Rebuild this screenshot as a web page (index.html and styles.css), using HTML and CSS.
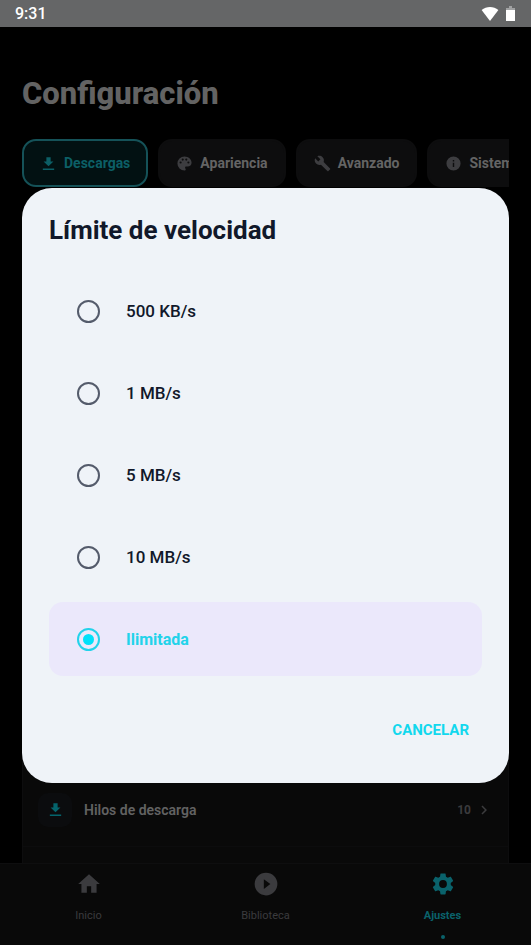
FILE: index.html
```html
<!DOCTYPE html>
<html lang="es">
<head>
<meta charset="utf-8">
<meta name="viewport" content="width=device-width, initial-scale=1">
<title>Configuración</title>
<link rel="stylesheet" href="styles.css">
</head>
<body>
<svg class="sprite" aria-hidden="true">
  <symbol id="download" viewBox="0 0 24 24"><path d="M19 9h-4V3H9v6H5l7 7 7-7zM4 19v2h16v-2H4z"/></symbol>
</svg>
<div class="app">
  <header class="status">
    <span>9:31</span>
    <span class="status-icons">
      <svg width="18" height="16" viewBox="0 0 18 16"><path d="M9 15 .6 4C3 2 6 1 9 1s6 1 8.400 3L9 15z" fill="#fff"/></svg>
      <svg width="9" height="16" viewBox="0 0 9 16"><path d="M3 0h3v2h3v4H0V2h3z" fill="#a0a1a2"/><path d="M0 4h9v11H0z" fill="#fff"/></svg>
    </span>
  </header>
  <main class="page">
    <h1>Configuración</h1>
    <nav class="tabs" aria-label="Secciones">
      <button class="tab tab-active"><svg class="icon-tab"><use href="#download"/></svg>Descargas</button>
      <button class="tab"><svg class="icon-tab" viewBox="0 0 24 24"><path d="M12 2a10 10 0 0 0 0 20c.9 0 1.700-.7 1.700-1.700 0-.4-.2-.8-.5-1.100-.2-.3-.4-.7-.4-1.100 0-.9.7-1.700 1.700-1.700h2c3 0 5.500-2.500 5.500-5.500C22 6 17.500 2 12 2zm-5.500 10a1.500 1.500 0 1 1 0-3 1.500 1.500 0 0 1 0 3zm3-4a1.500 1.500 0 1 1 0-3 1.500 1.500 0 0 1 0 3zm5 0a1.500 1.500 0 1 1 0-3 1.500 1.500 0 0 1 0 3zm3 4a1.500 1.500 0 1 1 0-3 1.500 1.500 0 0 1 0 3z"/></svg>Apariencia</button>
      <button class="tab"><svg class="icon-tab" viewBox="0 0 24 24"><path d="m22.700 19-9.100-9.100c.9-2.300.4-5-1.500-6.900-2-2-5-2.400-7.400-1.300L9 6 6 9 1.600 4.700C.4 7.100.9 10.100 2.900 12.100c1.900 1.900 4.600 2.400 6.900 1.500l9.100 9.100c.4.4 1 .4 1.400 0l2.300-2.300c.5-.4.5-1.100.1-1.400z"/></svg>Avanzado</button>
      <button class="tab"><svg class="icon-tab" viewBox="0 0 24 24"><path d="M12 2a10 10 0 1 0 0 20 10 10 0 0 0 0-20zm1 15h-2v-6h2v6zm0-8h-2V7h2v2z"/></svg>Sistema</button>
    </nav>
    <section class="settings">
      <button class="setting">
        <span class="setting-icon"><svg width="17" height="17"><use href="#download"/></svg></span>
        <span class="setting-name">Hilos de descarga</span>
        <span class="setting-value">10</span>
        <svg width="18" height="18" viewBox="0 0 24 24"><path d="M10 6 8.600 7.400l4.600 4.600-4.600 4.600L10 18l6-6z"/></svg>
      </button>
    </section>
  </main>
  <nav class="bottom" aria-label="Principal">
    <a class="dest" href="#inicio"><svg width="26" height="26" viewBox="0 0 24 24"><path d="M10 20v-6h4v6h5v-8h3L12 3 2 12h3v8z"/></svg>Inicio</a>
    <a class="dest" href="#biblioteca"><svg width="26" height="26" viewBox="0 0 24 24"><path d="M12 1.500a10.500 10.500 0 1 0 0 21 10.500 10.500 0 0 0 0-21zm-2 15v-9l6 4.500-6 4.500z"/></svg>Biblioteca</a>
    <a class="dest dest-active" href="#ajustes"><svg width="26" height="26" viewBox="0 0 24 24"><path d="M19.140 12.940c.040-.3.060-.610.060-.940 0-.320-.020-.640-.070-.940l2.030-1.580c.180-.140.230-.410.120-.610l-1.920-3.320c-.120-.220-.370-.290-.590-.220l-2.390.960c-.5-.380-1.030-.7-1.620-.940l-.360-2.540c-.040-.240-.240-.410-.480-.410h-3.840c-.240 0-.430.170-.470.410l-.360 2.540c-.590.240-1.130.570-1.620.940l-2.390-.960c-.220-.080-.470 0-.590.220L2.740 8.870c-.120.210-.080.470.120.610l2.030 1.580c-.050.3-.090.630-.090.940s.020.640.070.940l-2.030 1.580c-.180.140-.230.410-.120.610l1.920 3.320c.120.220.370.290.590.220l2.390-.960c.5.380 1.030.7 1.620.940l.360 2.540c.050.240.240.410.480.410h3.840c.240 0 .440-.170.470-.410l.360-2.540c.590-.240 1.130-.560 1.620-.940l2.390.960c.220.080.470 0 .590-.220l1.920-3.320c.120-.220.070-.470-.120-.610l-2.010-1.580zM12 15.600A3.600 3.600 0 1 1 12 8.400a3.600 3.600 0 0 1 0 7.200z"/></svg>Ajustes</a>
  </nav>
</div>
<div class="overlay">
  <form class="dialog" role="dialog" aria-labelledby="dialog-title">
    <h2 id="dialog-title">Límite de velocidad</h2>
    <div class="options">
      <label class="option"><input type="radio" name="limit">500 KB/s</label>
      <label class="option"><input type="radio" name="limit">1 MB/s</label>
      <label class="option"><input type="radio" name="limit">5 MB/s</label>
      <label class="option"><input type="radio" name="limit">10 MB/s</label>
      <label class="option option-active"><input type="radio" name="limit" checked>Ilimitada</label>
    </div>
    <button class="cancel" type="button">CANCELAR</button>
  </form>
</div>
</body>
</html>
```
FILE: styles.css
```css
* { box-sizing: border-box; }

body {
  margin: 0;
  background: #000;
  font-family: Roboto, sans-serif;
}

button {
  margin: 0;
  border: 0;
  background: none;
  font: inherit;
  color: inherit;
}

svg { display: block; flex: none; fill: currentColor; }

.sprite { position: absolute; width: 0; height: 0; }

.app {
  display: flex;
  flex-direction: column;
  height: 100vh;
}

.status {
  display: flex;
  flex: none;
  align-items: center;
  justify-content: space-between;
  height: 27px;
  padding: 0 16px 0 15px;
  background: #656667;
  color: #fff;
  font-size: 16px;
  font-weight: 500;
}

.status-icons { display: flex; align-items: center; gap: 7px; }

.page {
  display: flex;
  flex: 1;
  flex-direction: column;
  min-height: 0;
  padding: 49px 22px 0;
}

h1 {
  margin: 0 0 27px;
  color: #636363;
  font-size: 31px;
  font-weight: 800;
  line-height: 36px;
}

.tabs { display: flex; flex: none; gap: 10px; overflow: hidden; }

.tab {
  display: flex;
  flex: none;
  align-items: center;
  gap: 7px;
  height: 48px;
  padding: 0 16px;
  border: 2px solid #0d0d0e;
  border-radius: 14px;
  background: #0d0d0e;
  color: #646464;
  font-size: 14px;
  font-weight: 700;
}

.tab .icon-tab { color: #3d3d40; }

.tab-active { border-color: #155258; background: #021112; color: #0c5f66; }
.tab-active .icon-tab { color: #0c5f66; }

.icon-tab { width: 17px; height: 17px; }

.settings {
  display: flex;
  flex: 1;
  flex-direction: column;
  justify-content: flex-end;
  margin-top: 36px;
  padding-bottom: 16px;
  border: 1px solid #0d0d0e;
  border-bottom: 0;
  background: #090909;
}

.setting {
  display: flex;
  align-items: center;
  width: 100%;
  height: 74px;
  padding: 0 15px;
  border-bottom: 1px solid #0c0c0d;
  color: #3b3b3d;
  text-align: left;
}

.setting-icon {
  display: grid;
  place-items: center;
  width: 34px;
  height: 34px;
  margin-right: 12px;
  border-radius: 10px;
  background: #0b0c0e;
  color: #04646c;
}

.setting-name { flex: 1; color: #626262; font-size: 14px; font-weight: 600; }
.setting-value { margin-right: 4px; font-size: 12px; font-weight: 700; }

.bottom {
  display: flex;
  flex: none;
  height: 82px;
  border-top: 1px solid #0e0e0f;
  background: #090909;
}

.dest {
  display: flex;
  flex: 1;
  flex-direction: column;
  align-items: center;
  gap: 12px;
  padding-top: 7px;
  color: #3b3b3e;
  font-size: 11px;
  line-height: 14px;
  text-decoration: none;
}

.dest-active { color: #0a626b; font-weight: 700; }

.dest-active::after {
  width: 4px;
  height: 4px;
  border-radius: 50%;
  background: currentColor;
  content: "";
}

.overlay {
  position: fixed;
  inset: 26px 0 0;
  display: flex;
  align-items: center;
  padding: 0 22px;
}

.dialog {
  display: flex;
  flex: 1;
  flex-direction: column;
  padding: 26px 27px;
  border-radius: 30px;
  background: #eff3f8;
  color: #11182a;
}

h2 {
  margin: 0 0 28px;
  font-size: 26px;
  font-weight: 700;
  line-height: 32px;
}

.options { display: grid; gap: 8px; }

.option {
  display: flex;
  align-items: center;
  gap: 26px;
  height: 74px;
  padding: 0 28px;
  border-radius: 14px;
  font-size: 17px;
  font-weight: 500;
}

.option-active { background: #ebe8fb; color: #22d3ea; font-size: 16px; font-weight: 700; }

.option input {
  display: grid;
  place-items: center;
  width: 23px;
  height: 23px;
  margin: 0;
  border: 2px solid #545b6b;
  border-radius: 50%;
  appearance: none;
}

.option input:checked { border-color: #22d3ea; }

.option input:checked::before {
  width: 11px;
  height: 11px;
  border-radius: 50%;
  background: #00e1fa;
  content: "";
}

.cancel {
  align-self: flex-end;
  height: 54px;
  margin-top: 27px;
  padding: 0 13px;
  color: #12d8ee;
  font-size: 15px;
  font-weight: 700;
}
```
